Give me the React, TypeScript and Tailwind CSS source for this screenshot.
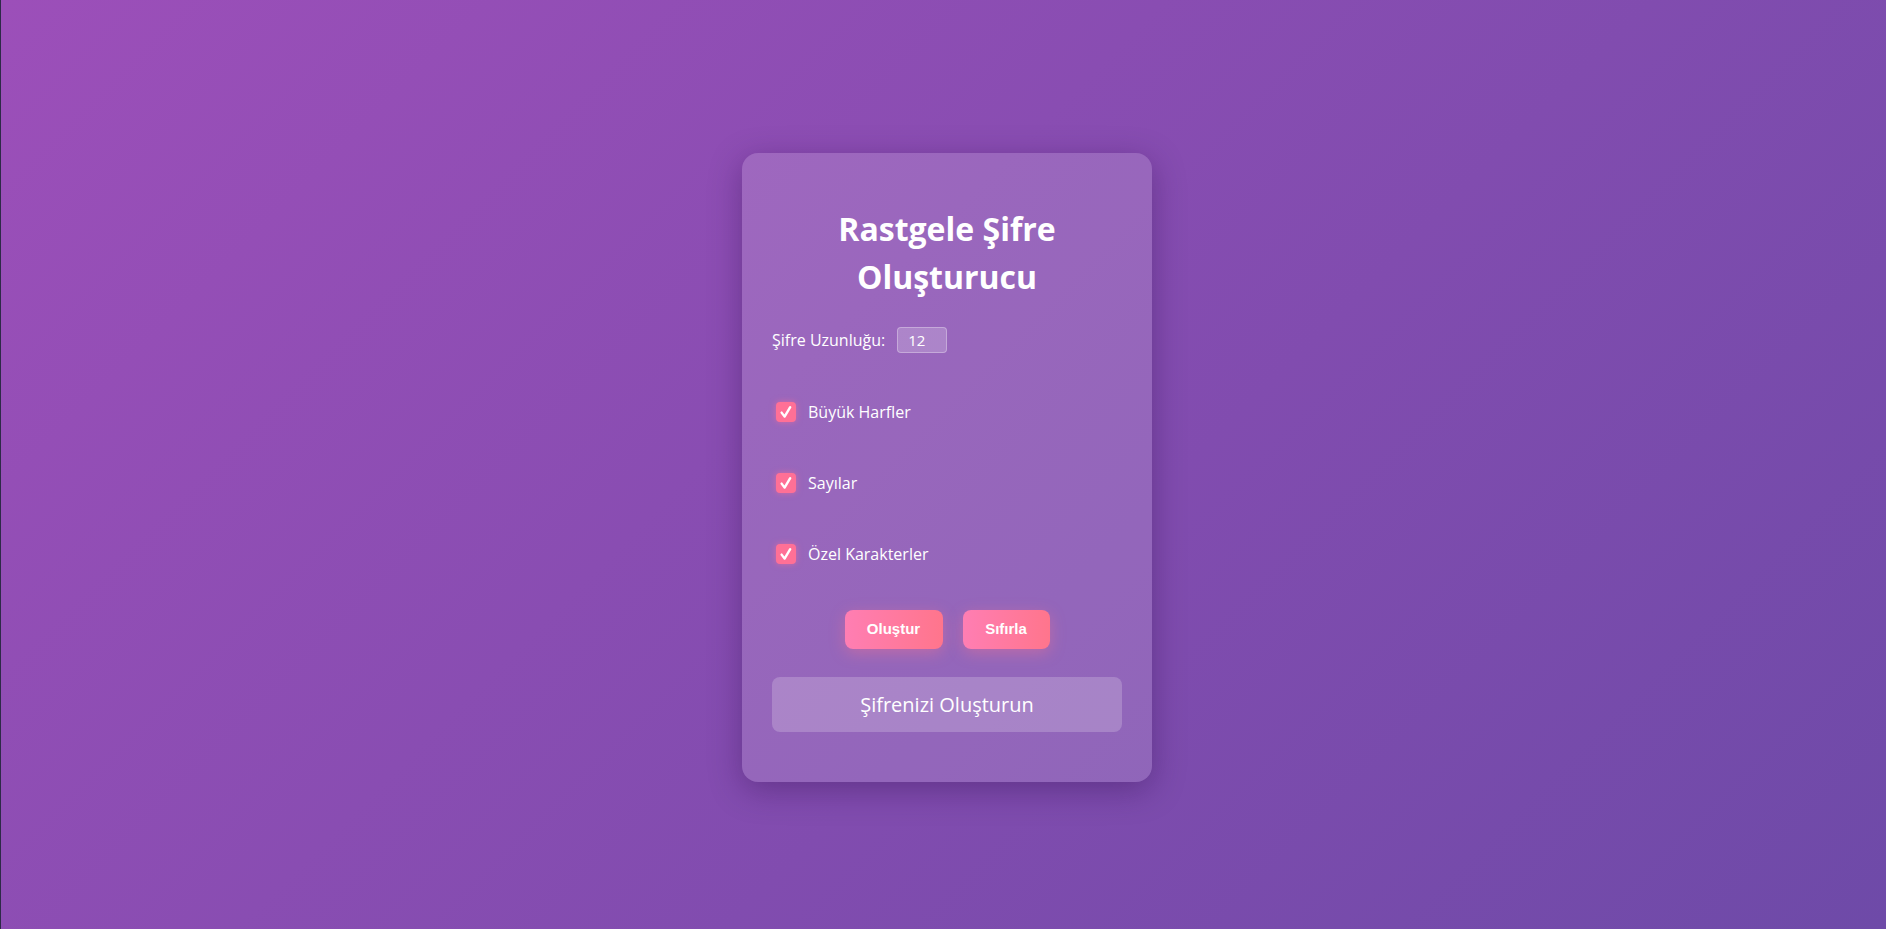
import { useState } from "react";

const options = [
  { key: "upper", label: "Büyük Harfler" },
  { key: "numbers", label: "Sayılar" },
  { key: "special", label: "Özel Karakterler" },
];

function CheckBox({ checked, onClick }: { checked: boolean; onClick: () => void }) {
  return (
    <button
      onClick={onClick}
      className={
        "ml-[4px] flex h-[20px] w-[20px] items-center justify-center rounded-[4px] shadow-[0_0_6px_rgba(255,112,150,0.6)] " +
        (checked ? "bg-[#ff7096]" : "bg-white/30")
      }
    >
      {checked && (
        <svg width="14" height="14" viewBox="0 0 14 14" fill="none">
          <path
            d="M2.6 7.6 L5.6 11.6 L11.2 2.2"
            stroke="white"
            strokeWidth="2.4"
            strokeLinecap="round"
            strokeLinejoin="round"
          />
        </svg>
      )}
    </button>
  );
}

export default function App() {
  const [length, setLength] = useState("12");
  const [checks, setChecks] = useState<Record<string, boolean>>({
    upper: true,
    numbers: true,
    special: true,
  });
  const [password, setPassword] = useState("");

  function generate() {
    let chars = "abcdefghijklmnopqrstuvwxyz";
    if (checks.upper) chars += "ABCDEFGHIJKLMNOPQRSTUVWXYZ";
    if (checks.numbers) chars += "0123456789";
    if (checks.special) chars += "!@#$%^&*()_+-=";
    let out = "";
    const n = parseInt(length) || 12;
    for (let i = 0; i < n; i++) {
      out += chars[Math.floor(Math.random() * chars.length)];
    }
    setPassword(out);
  }

  return (
    <div className="flex min-h-screen w-full items-center justify-center border-l border-[#2e2a48] bg-[linear-gradient(135deg,#9c4fb9,#6e4aa8)] pl-[7px] pt-[6px] font-['Open_Sans',sans-serif] text-white">
      <div className="flex w-[410px] flex-col rounded-[16px] bg-white/15 px-[30px] pt-[30px] pb-[50px] shadow-[0_8px_32px_rgba(40,10,70,0.35)]">
        <h1 className="mt-[22px] text-center text-[32px] leading-[48px] font-bold">
          Rastgele Şifre
          <br />
          Oluşturucu
        </h1>

        <div className="mt-[26px] flex h-[26px] items-center">
          <label className="text-[16px]">Şifre Uzunluğu:</label>
          <input
            value={length}
            onChange={(e) => setLength(e.target.value)}
            className="ml-[12px] h-[26px] w-[50px] rounded-[4px] border border-white/30 bg-white/20 px-[10px] text-[15px] text-white outline-none"
          />
        </div>

        <div className="mt-[49px] flex flex-col gap-[51px]">
          {options.map((o) => (
            <div key={o.key} className="flex h-[20px] items-center gap-[12px]">
              <CheckBox
                checked={checks[o.key]}
                onClick={() => setChecks({ ...checks, [o.key]: !checks[o.key] })}
              />
              <span className="text-[16px]">{o.label}</span>
            </div>
          ))}
        </div>

        <div className="mt-[46px] flex justify-center gap-[20px] font-['Liberation_Sans',sans-serif]">
          <button
            onClick={generate}
            className="h-[39px] w-[98px] rounded-[8px] bg-[linear-gradient(90deg,#ff7eb3,#ff758c)] text-[15px] font-bold shadow-[0_4px_15px_rgba(255,117,140,0.4)]"
          >
            Oluştur
          </button>
          <button
            onClick={() => setPassword("")}
            className="h-[39px] w-[87px] rounded-[8px] bg-[linear-gradient(90deg,#ff7eb3,#ff758c)] text-[15px] font-bold shadow-[0_4px_15px_rgba(255,117,140,0.4)]"
          >
            Sıfırla
          </button>
        </div>

        <div className="mt-[28px] flex h-[55px] items-center justify-center rounded-[8px] bg-white/20 text-[20px]">
          {password || "Şifrenizi Oluşturun"}
        </div>
      </div>
    </div>
  );
}
